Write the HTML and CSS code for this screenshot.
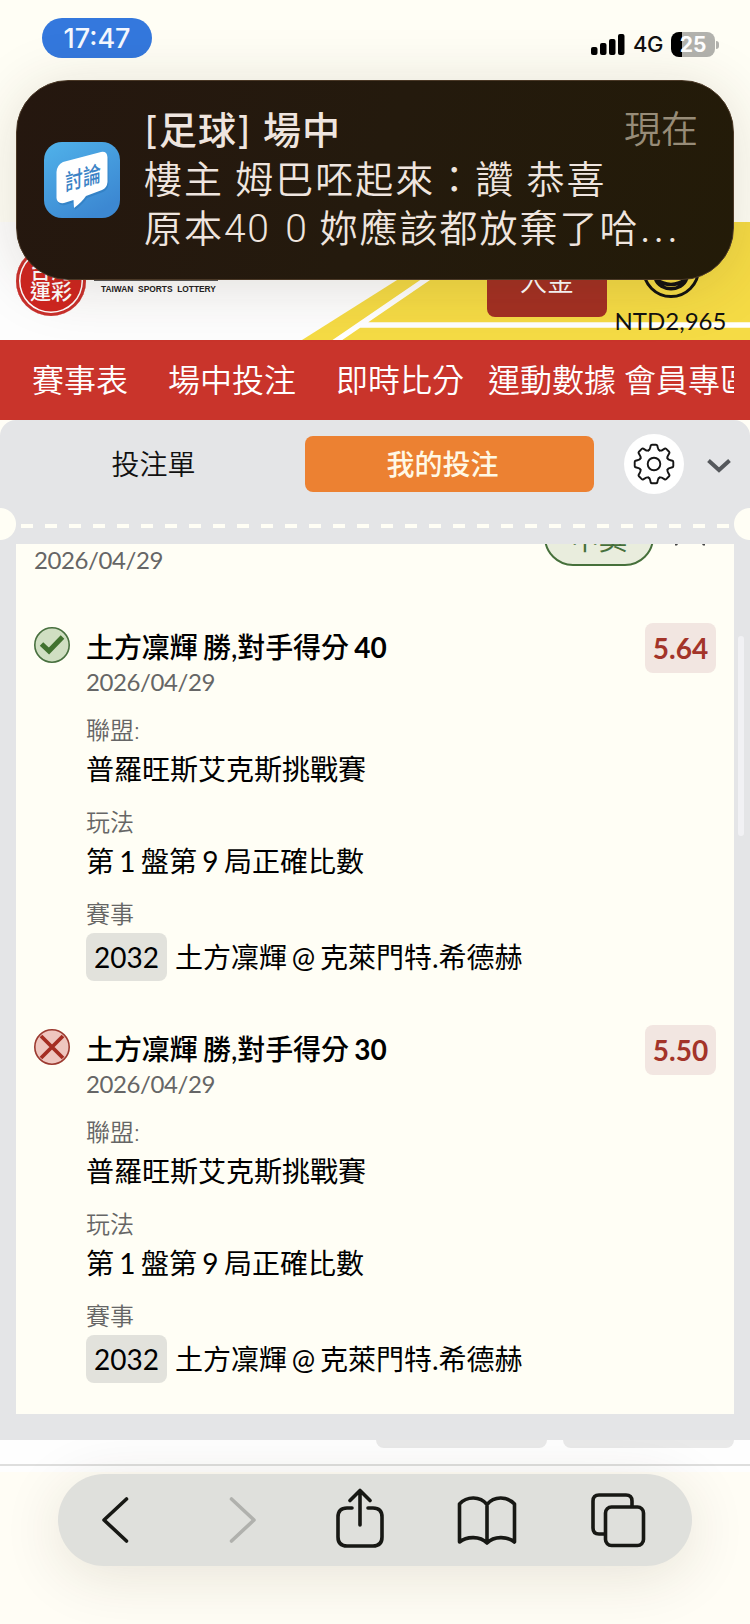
FILE: index.html
```html
<!DOCTYPE html>
<html lang="zh-Hant">
<head>
<meta charset="utf-8">
<title>我的投注</title>
<link rel="stylesheet" href="styles.css">
</head>
<body>
<div class="screen">
  <div class="status">
    <span class="clock">17:47</span>
    <div class="signals">
      <svg width="34" height="22" viewBox="0 0 34 22"><rect x="0" y="13" width="6.5" height="8" rx="2"/><rect x="9" y="9" width="6.5" height="12" rx="2"/><rect x="18" y="5" width="6.5" height="16" rx="2"/><rect x="27" y="0" width="6.5" height="21" rx="2"/></svg>
      <span class="net">4G</span>
      <span class="battery">25</span><i class="cap"></i>
    </div>
  </div>

  <header class="brand">
    <svg class="stripes" width="750" height="118" viewBox="0 0 750 118">
      <path fill="#f5db45" d="M302 118L489 0H750V118Z"/>
      <path stroke="#fff" stroke-width="5.5" fill="none" d="M333 121L510 0M360 103H750"/>
    </svg>
    <div class="seal"><span>台灣</span><span>運彩</span></div>
    <div class="brand-name">TAIWAN&nbsp; SPORTS&nbsp; LOTTERY</div>
    <button class="deposit">入金</button>
    <div class="account">
      <svg width="60" height="60" viewBox="0 0 60 60" fill="none" stroke="#111" stroke-width="3"><circle cx="30" cy="30" r="27.5"/><path stroke-width="3.500" d="M14.500 40C19 53 41 53 45.500 40Q30 51 14.500 40Z"/></svg>
      <span>NTD2,965</span>
    </div>
  </header>

  <nav class="nav"><div class="nav-row">
    <a class="w3">賽事表</a><a class="w4">場中投注</a><a class="live">即時比分</a><a class="data">運動數據</a><a>會員專區</a>
  </div></nav>

  <main class="slip">
    <div class="tabs">
      <span class="tab">投注單</span>
      <span class="tab on">我的投注</span>
      <span class="gear"><svg width="44" height="44" viewBox="-22 -22 44 44" fill="none" stroke="#151515" stroke-width="1.900" stroke-linecap="round">
        <defs><path id="tooth" d="M-5.600 -13.500C-4.600 -13.900 -4 -15 -3.700 -16.600L-3.300 -18.400Q-3 -19.300 -2 -19.300H2Q3 -19.300 3.300 -18.400L3.700 -16.600C4 -15 4.600 -13.900 5.600 -13.500"/></defs>
        <circle r="6.300"/><use href="#tooth"/><use href="#tooth" transform="rotate(45)"/><use href="#tooth" transform="rotate(90)"/><use href="#tooth" transform="rotate(135)"/><use href="#tooth" transform="rotate(180)"/><use href="#tooth" transform="rotate(225)"/><use href="#tooth" transform="rotate(270)"/><use href="#tooth" transform="rotate(315)"/></svg></span>
      <svg class="more" width="24" height="14" viewBox="0 0 24 14" fill="none" stroke="#55585c" stroke-width="4"><path d="M1.500 1.500L12 11L22.500 1.500"/></svg>
    </div>
    <div class="tear"><i class="dashes"></i></div>
    <section class="list">
      <div class="summary">
        <span class="date">2026/04/29</span>
        <span class="won"><b>中獎</b></span>
        <svg class="fold" width="34" height="2" viewBox="0 0 34 2" fill="#444"><path d="M1 0H4L3 1.500H1ZM28 0H31V1.500H29Z"/></svg>
      </div>
      <article class="bet">
        <svg class="mark" width="36" height="36" viewBox="0 0 36 36"><circle cx="18" cy="18" r="17.200" fill="#d0dfc2" stroke="#48703f" stroke-width="1.600"/><path d="M7.500 17L15 24L28.500 10" fill="none" stroke="#41722f" stroke-width="5"/></svg>
        <div class="info">
          <h3>土方凜輝 勝,對手得分 <b>40</b></h3>
          <div class="date">2026/04/29</div>
          <div class="label">聯盟:</div><div class="value">普羅旺斯艾克斯挑戰賽</div>
          <div class="label">玩法</div><div class="value">第 1 盤第 9 局正確比數</div>
          <div class="label">賽事</div><div class="match"><span class="code">2032</span><span>土方凜輝 @ 克萊門特.希德赫</span></div>
        </div>
        <span class="odds">5.64</span>
      </article>
      <article class="bet">
        <svg class="mark" width="36" height="36" viewBox="0 0 36 36"><circle cx="18" cy="18" r="17.200" fill="#efc6bf" stroke="#9c3a30" stroke-width="1.600"/><path d="M7 7L29 29M29 7L7 29" fill="none" stroke="#a52d22" stroke-width="3.800"/></svg>
        <div class="info">
          <h3>土方凜輝 勝,對手得分 <b>30</b></h3>
          <div class="date">2026/04/29</div>
          <div class="label">聯盟:</div><div class="value">普羅旺斯艾克斯挑戰賽</div>
          <div class="label">玩法</div><div class="value">第 1 盤第 9 局正確比數</div>
          <div class="label">賽事</div><div class="match"><span class="code">2032</span><span>土方凜輝 @ 克萊門特.希德赫</span></div>
        </div>
        <span class="odds">5.50</span>
      </article>
    </section>
    <i class="scrollbar"></i>
  </main>

  <div class="under"><i></i><i></i></div>

  <footer class="browser">
    <div class="pill">
      <svg width="30" height="48" viewBox="0 0 30 48" class="back"><path d="M25.500 3L3 24L25.500 45"/></svg>
      <svg width="30" height="48" viewBox="0 0 30 48" class="fwd"><path d="M4.500 3L27 24L4.500 45"/></svg>
      <svg width="48" height="62" viewBox="0 0 48 62" class="share"><path d="M16 20H11Q2 20 2 29V49Q2 58 11 58H37Q46 58 46 49V29Q46 20 37 20H32M24 37V3M14 12.500L24 2.500L34 12.500"/></svg>
      <svg width="60" height="52" viewBox="0 0 60 52" class="book"><path d="M30 10.500C23 2 10 2 2.500 10V48C10 42 23 42 30 49C37 42 50 42 57.500 48V10C50 2 37 2 30 10.500ZM30 10.500V49"/></svg>
      <svg width="56" height="56" viewBox="0 0 56 56" class="windows"><path d="M42 14V9Q42 3 36 3H9Q3 3 3 9V36Q3 42 9 42H14"/><rect x="15.500" y="15" width="38" height="38.500" rx="6"/></svg>
    </div>
  </footer>

  <aside class="toast">
    <svg class="app" width="76" height="76" viewBox="0 0 76 76">
      <defs><linearGradient id="sky" x1="0" y1="0" x2=".6" y2="1"><stop offset="0" stop-color="#50b2ea"/><stop offset="1" stop-color="#3c88d2"/></linearGradient></defs>
      <rect width="76" height="76" rx="18" fill="url(#sky)"/>
      <path transform="translate(1 2)" fill="#236fb0" opacity=".4" d="M19 20L57 10Q63 9 63.500 15V40Q63 46 58 48L42 54Q38 60 30 66L29.500 58L20 61Q13 62 12.500 56V30Q13 23 19 20Z"/>
      <path fill="#fff" d="M19 20L57 10Q63 9 63.500 15V40Q63 46 58 48L42 54Q38 60 30 66L29.500 58L20 61Q13 62 12.500 56V30Q13 23 19 20Z"/>
      <text transform="matrix(1 -.28 0 1.250 21 49)" class="app-text" textLength="36" lengthAdjust="spacingAndGlyphs">討論</text>
    </svg>
    <div class="message">
      <div class="headline"><strong><span class="bracket">[</span>足球<span class="bracket">]</span> 場中</strong><time>現在</time></div>
      <p>樓主 姆巴呸起來：讚 恭喜</p>
      <p>原本<span class="num">40 0</span> 妳應該都放棄了哈<span class="dots">...</span></p>
    </div>
  </aside>
</div>
</body>
</html>
```
FILE: styles.css
```css
* { box-sizing: border-box; }
body { margin: 0; background: #fffef6; font-family: Lato, "Noto Sans CJK TC", sans-serif; color: #111; }
svg { display: block; flex: none; }
.screen { position: relative; width: 750px; height: 1624px; overflow: hidden; display: flex; flex-direction: column; }

.status { height: 222px; flex: none; display: flex; justify-content: space-between; align-items: flex-start; padding: 18px 31px 0 42px; background: #fffef5; }
.clock { width: 110px; height: 40px; border-radius: 20px; background: #3478dd; color: #f4f8ff; font: 500 27px/41px Inter, sans-serif; text-align: center; }
.signals { display: flex; align-items: center; height: 25px; margin-top: 14px; }
.net { font: 500 22px/25px Inter, sans-serif; margin: 0 9px 0 8px; width: 29px; letter-spacing: -.5px; }
.battery { width: 44px; height: 25px; border-radius: 8px; background: linear-gradient(90deg, #000 11px, #b2b2ad 11px); color: #fff; font: 700 21px/25px Inter, sans-serif; text-align: center; }
.cap { width: 3px; height: 8px; margin-left: 1px; border-radius: 0 3px 3px 0; background: #b2b2ad; }

.brand { position: relative; height: 118px; flex: none; background: #fdfdfd; display: flex; align-items: flex-start; }
.stripes { position: absolute; inset: 0; }
.seal { position: relative; width: 70px; height: 70px; margin: 24px 0 0 16px; border-radius: 50%; background: #cf2620; box-shadow: inset 0 0 0 3px #c9302c, inset 0 0 0 4.5px #fff; color: #fff; font-weight: 500; font-size: 21px; line-height: 21px; display: flex; flex-direction: column; align-items: center; padding-top: 13px; }
.brand-name { position: relative; margin: 58px 0 0 8px; width: 124px; border-top: 1px solid #555; padding: 4px 0 0 7px; font: 700 8.4px/8px "Liberation Sans", sans-serif; white-space: nowrap; color: #222; }
.deposit { position: relative; margin: 35px 0 0 269px; width: 120px; height: 60px; border: 0; border-radius: 8px; background: #a33023; color: #fff; font: 350 27px/28px "Noto Sans CJK TC", sans-serif; padding: 0 0 14px; }
.account { position: relative; width: 127px; display: flex; flex-direction: column; align-items: center; padding-top: 17px; font-size: 24px; line-height: 24px; color: #111; }
.account span { margin-top: 10px; }

.nav { height: 80px; flex: none; background: #c9342b; padding: 0 16px; color: #fff; }
.nav-row { display: flex; overflow: hidden; padding-left: 16px; font-size: 32px; line-height: 79px; font-weight: 350; }
.nav-row a { flex: none; }
.w3 { width: 136px; } .w4 { width: 168px; } .live { width: 152px; } .data { width: 136px; }

.slip { position: relative; height: 1020px; flex: none; background: #e4e5e7; border-radius: 16px 16px 0 0; padding-bottom: 26px; display: flex; flex-direction: column; }
.tabs { display: flex; align-items: center; padding: 14px 19px 0 16px; height: 74px; }
.tab { width: 289px; height: 56px; padding-right: 14px; border-radius: 8px; text-align: center; font-size: 28px; line-height: 57px; font-weight: 350; }
.tab.on { background: #ec8132; color: #fff8e5; font-weight: 500; }
.gear { width: 60px; height: 60px; margin: 0 23px 0 30px; border-radius: 50%; background: #fff; display: flex; align-items: center; justify-content: center; }
.more { margin-top: 4px; }
.tear { height: 50px; padding: 30px 21px 0; background: radial-gradient(circle at 0 30px, #fffef5 15.5px, transparent 16.5px), radial-gradient(circle at 100% 30px, #fffef5 15.5px, transparent 16.5px); }
.dashes { display: block; height: 4px; background: repeating-linear-gradient(90deg, #fffef5 0 12px, transparent 12px 24px); }
.list { height: 870px; overflow: hidden; margin: 0 16px; background: #fffef5; padding: 0 18px; }
.summary { height: 79px; display: flex; align-items: flex-start; }
.date { color: #666; font-size: 24px; line-height: 32px; letter-spacing: -.4px; }
.summary .date { width: 510px; }
.won { width: 110px; height: 58px; margin-top: -36px; border: 2px solid #46703b; border-radius: 29px; background: #e9eddd; color: #46703b; text-align: center; font-size: 28px; line-height: 58px; }
.won b { font-weight: 400; }
.fold { margin-left: 20px; }
.bet { display: flex; align-items: flex-start; height: 402px; }
.mark { margin-top: 4px; }
.info { width: 559px; margin: 5px 0 0 16px; }
h3 { margin: 0; font-size: 28px; line-height: 39px; font-weight: 500; color: #000; letter-spacing: -.1px; word-spacing: -1.5px; }
h3 b { font-weight: 700; }
h3 + .date { margin-top: -1px; }
.label { margin-top: 15px; color: #666; font-size: 24px; line-height: 32px; font-weight: 350; }
h3 + .date + .label { margin-top: 16px; }
.value { margin-top: 1px; font-size: 28px; line-height: 44px; color: #000; word-spacing: -1.8px; }
.match { display: flex; gap: 8px; align-items: center; margin-top: 3px; height: 48px; font-size: 28px; line-height: 46px; color: #000; white-space: nowrap; word-spacing: -2.4px; }
.code { width: 81px; height: 48px; border-radius: 8px; background: #e2e2dc; line-height: 48px; text-align: center; }
.odds { width: 71px; height: 50px; border-radius: 8px; background: #f2e6e1; color: #a33429; font-size: 28px; line-height: 51px; font-weight: 700; text-align: center; }
.scrollbar { position: absolute; right: 6px; top: 216px; width: 6px; height: 200px; border-radius: 3px; background: #f1f1f4; }

.under { height: 26px; flex: none; padding-left: 376px; display: flex; gap: 16px; background: #fefefe; border-bottom: 2px solid #dededd; }
.under i { width: 171px; height: 8px; border-radius: 0 0 8px 8px; background: #e9e9e9; }
.browser { flex: 1; padding: 8px 58px 0 58px; background: linear-gradient(#fefefe 6px, #fffdf5 6px); }
.pill { height: 92px; border-radius: 46px; background: #dfe0dc; box-shadow: 0 10px 60px rgba(60,40,20,.12); display: flex; align-items: flex-start; }
.pill svg { fill: none; stroke: #171814; stroke-width: 3.6; stroke-linecap: round; stroke-linejoin: round; }
.back { margin: 22px 0 0 43px; }
.pill .fwd { margin: 22px 0 0 96px; stroke: #b0b1ad; }
.share { margin: 14px 0 0 79px; }
.book { margin: 20px 0 0 73px; }
.windows { margin: 18px 0 0 73px; }

.toast { position: absolute; left: 16px; top: 80px; width: 718px; height: 200px; border-radius: 52px; background: linear-gradient(110deg, #25170f, #241a0d 50%, #231b08); border: 1px solid #4a3826; box-shadow: 0 6px 60px rgba(60,40,20,.15); display: flex; color: #efe5df; font-family: Inter, "Noto Sans CJK TC", sans-serif; }
.app { margin: 61px 0 0 27px; }
.app-text { font: 500 18px "Noto Sans CJK TC", sans-serif; fill: #3b83c6; }
.message { margin: 24px 0 0 24px; width: 554px; font-size: 38px; white-space: nowrap; }
.headline { display: flex; justify-content: space-between; line-height: 50px; }
.headline strong { font-weight: 500; letter-spacing: 1px; }
.bracket { font-weight: 400; }
.headline time { color: #978c78; font-size: 37px; font-weight: 350; }
.message p { margin: 0; line-height: 49px; letter-spacing: 2px; font-weight: 350; word-spacing: -1.5px; }
.num { font-family: Roboto, sans-serif; font-weight: 350; font-size: 39px; letter-spacing: 1.5px; word-spacing: 4px; }
.dots { letter-spacing: 3px; }
```
